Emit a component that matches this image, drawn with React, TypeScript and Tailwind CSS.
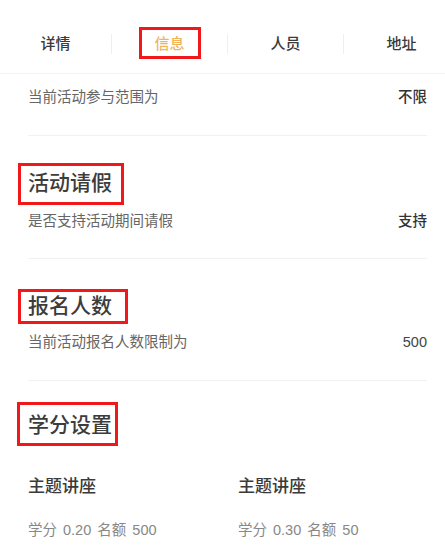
import React from 'react';

const font = { fontFamily: '"Liberation Sans", "Noto Sans CJK SC", "Noto Sans", sans-serif' };

// red annotation frame drawn over a label
const Frame: React.FC<{ className: string }> = ({ className }) => (
  <span className={`pointer-events-none absolute border-[3px] border-[#f01818] ${className}`} />
);

const tabs = ['详情', '信息', '人员', '地址'];

function TabBar() {
  return (
    <div className="flex h-[74px] items-start overflow-hidden border-b border-[#f2f2f2] pt-[34px]">
      {tabs.map((t, i) => (
        <div
          key={t}
          className={`flex h-[20px] shrink-0 items-center justify-center ${i === 0 ? 'w-[111px]' : 'w-[116px] border-l border-[#efefef]'}`}
        >
          <span
            className={`relative text-[15px] leading-[20px] font-medium ${i === 1 ? 'text-[#f1b35c]' : 'text-[#3a3a3a]'}`}
          >
            {t}
            {i === 1 && <Frame className="-left-[15px] -right-[16px] -top-[7px] -bottom-[5px]" />}
          </span>
        </div>
      ))}
    </div>
  );
}

const Row: React.FC<{ label: string; value: string; bold?: boolean }> = ({ label, value, bold }) => (
  <div className="flex items-center justify-between text-[14.5px] leading-[20px]">
    <span className="text-[#666]">{label}</span>
    <span className={bold ? 'font-medium text-[#333]' : 'text-[#444]'}>{value}</span>
  </div>
);

const Heading: React.FC<{ title: string; frame: string }> = ({ title, frame }) => (
  <div className="flex">
    <span className="relative text-[21px] leading-[28px] font-medium text-[#3c3c3c]">
      {title}
      <Frame className={frame} />
    </span>
  </div>
);

const Divider = () => <div className="h-px bg-[#f1f1f1]" />;

export default function App() {
  return (
    <div className="min-h-[554px] w-[445px] overflow-hidden bg-white" style={font}>
      <TabBar />
      <div className="pl-[28px] pr-[18px]">
        <div className="pt-[13px] pb-[28px]">
          <Row label="当前活动参与范围为" value="不限" bold />
        </div>
        <Divider />

        <div className="pt-[33px]">
          <Heading title="活动请假" frame="-left-[10px] -right-[12px] -top-[6px] -bottom-[8px]" />
        </div>
        <div className="pt-[14px] pb-[27px]">
          <Row label="是否支持活动期间请假" value="支持" bold />
        </div>
        <Divider />

        <div className="pt-[33px]">
          <Heading title="报名人数" frame="-left-[10px] -right-[16px] -top-[3px] -bottom-[4px]" />
        </div>
        <div className="pt-[12px] pb-[28px]">
          <Row label="当前活动报名人数限制为" value="500" />
        </div>
        <Divider />

        <div className="pt-[30px]">
          <Heading title="学分设置" frame="-left-[11px] -right-[6px] -top-[9px] -bottom-[7px]" />
        </div>

        <div className="grid grid-cols-[210px_1fr] pt-[37px]">
          {[
            { name: '主题讲座', credit: '0.20', quota: '500' },
            { name: '主题讲座', credit: '0.30', quota: '50' },
          ].map((c, i) => (
            <div key={i}>
              <div className="text-[17px] leading-[22px] font-medium text-[#3a3a3a]">{c.name}</div>
              <div className="pt-[22px] text-[14.5px] leading-[20px] text-[#888] [word-spacing:2px]">
                学分 {c.credit} 名额 {c.quota}
              </div>
            </div>
          ))}
        </div>
      </div>
    </div>
  );
}
